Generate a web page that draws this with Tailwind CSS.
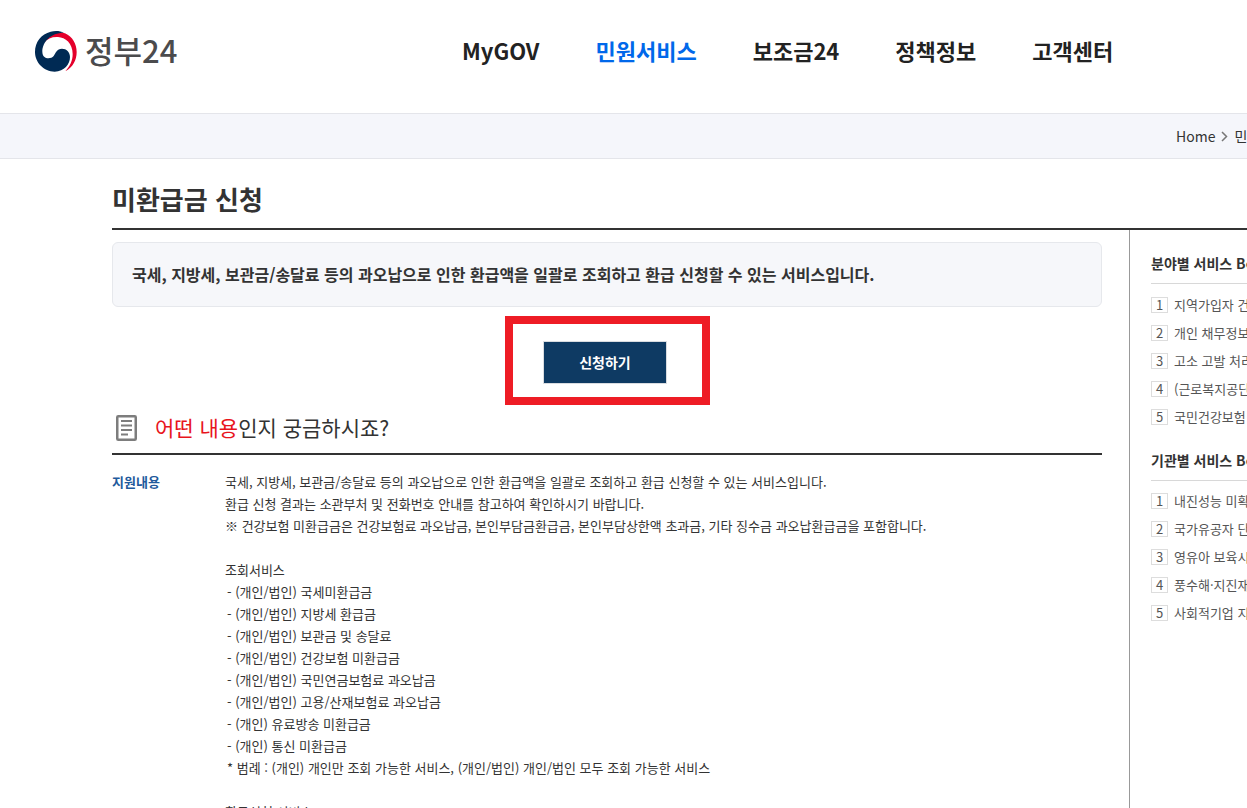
<!DOCTYPE html>
<html lang="ko">
<head>
<meta charset="utf-8">
<meta name="viewport" content="width=device-width, initial-scale=1">
<title>정부24 - 미환급금 신청</title>
<script src="https://cdn.jsdelivr.net/npm/@tailwindcss/browser@4"></script>
</head>
<body class="overflow-x-hidden bg-white font-['Noto_Sans_CJK_KR','Noto_Sans',sans-serif] text-[#333]">
<header class="flex h-[114px] items-start border-b border-[#e4e5ea] pt-[30px] pl-[34px]">
  <a href="#" class="flex w-[428px] shrink-0 items-start gap-[7px]" aria-label="정부24">
    <svg class="size-11 shrink-0" viewBox="12 12 132 132" aria-hidden="true">
      <path fill="#e4002b" d="M42 50C52 22 85 15 105 22C128 32 140 55 140 78C140 103 128 124 106 136C120 120 128 104 128 84C128 52 106 34 84 33C66 32 52 38 42 50Z"/>
      <path fill="#002a54" d="M102 20C90 14 74 14 62 17C34 24 15 48 15 78C15 110 42 137 74 137C103 137 120 114 120 93C120 78 109 68 96 68C80 68 78 80 71 90C62 101 37 100 37 77C37 48 62 20 102 20Z"/>
    </svg>
    <span class="text-[31px] leading-10 font-medium text-[#4b4b4d]">정부24</span>
  </a>
  <nav class="flex items-center gap-14 text-[22px] leading-10 font-bold whitespace-nowrap text-[#222]">
    <a href="#">MyGOV</a>
    <a href="#" class="text-[#0068ea]">민원서비스</a>
    <a href="#">보조금24</a>
    <a href="#">정책정보</a>
    <a href="#">고객센터</a>
  </nav>
</header>
<nav aria-label="현재 위치" class="flex h-[45px] items-center border-b border-[#e4e5ea] bg-[#f5f6fb] text-sm whitespace-nowrap">
  <div class="ml-auto flex w-[71px] items-center gap-1.5">
    <a href="#">Home</a>
    <svg class="h-3 w-[7px] shrink-0" viewBox="0 0 7 12" fill="none" stroke="#777" stroke-width="1.5" aria-hidden="true"><path d="M1 2l4.500 4.500L1 11"/></svg>
    <a href="#">민원서비스</a>
  </div>
</nav>
<div class="ml-28">
  <h1 class="border-b-2 border-[#333] pt-5 pb-[9px] text-[26px] leading-10 font-bold">미환급금 신청</h1>
  <div class="flex items-stretch">
    <main class="mr-[27px] min-w-0 flex-1 pt-3 pb-10">
      <p class="rounded-md border border-[#e6e8ec] bg-[#f6f7fa] px-[19px] py-5 text-base leading-[23px] font-bold">국세, 지방세, 보관금/송달료 등의 과오납으로 인한 환급액을 일괄로 조회하고 환급 신청할 수 있는 서비스입니다.</p>
      <div class="mt-[9px] ml-[393px] flex h-[89px] w-[205px] items-center border-8 border-[#ee1c25] pl-[30px]">
        <button type="button" class="mt-1 h-[43px] w-[124px] border border-[#d9dce0] bg-[#0e3a63] pb-0.5 text-sm font-bold text-white">신청하기</button>
      </div>
      <h2 class="flex h-[50px] items-center border-b-2 border-[#333] pb-0.5 pl-1 text-[21px] font-normal">
        <svg class="mr-[18px] h-[26px] w-[21px]" viewBox="0 0 21 26" fill="none" stroke="#7d7d7d" stroke-width="2" aria-hidden="true"><rect x="1.250" y="1.250" width="18.500" height="23.500" rx="1" stroke-width="2.500"/><path d="M5 6h11M5 10.500h11M5 15h11M5 19.500h7"/></svg>
        <span><span class="text-[#e8141c]">어떤 내용</span>인지 궁금하시죠?</span>
      </h2>
      <section class="mt-4 flex text-[13px] leading-[22px]">
        <h3 class="w-[113px] shrink-0 font-bold text-[#1f5a9c]">지원내용</h3>
        <div class="min-w-0 flex-1">
          <p>국세, 지방세, 보관금/송달료 등의 과오납으로 인한 환급액을 일괄로 조회하고 환급 신청할 수 있는 서비스입니다.</p>
          <p>환급 신청 결과는 소관부처 및 전화번호 안내를 참고하여 확인하시기 바랍니다.</p>
          <p>※ 건강보험 미환급금은 건강보험료 과오납금, 본인부담금환급금, 본인부담상한액 초과금, 기타 징수금 과오납환급금을 포함합니다.</p>
          <p class="mt-[22px]">조회서비스</p>
          <ul class="pl-0.5">
            <li>- (개인/법인) 국세미환급금</li>
            <li>- (개인/법인) 지방세 환급금</li>
            <li>- (개인/법인) 보관금 및 송달료</li>
            <li>- (개인/법인) 건강보험 미환급금</li>
            <li>- (개인/법인) 국민연금보험료 과오납금</li>
            <li>- (개인/법인) 고용/산재보험료 과오납금</li>
            <li>- (개인) 유료방송 미환급금</li>
            <li>- (개인) 통신 미환급금</li>
            <li>* 범례 : (개인) 개인만 조회 가능한 서비스, (개인/법인) 개인/법인 모두 조회 가능한 서비스</li>
          </ul>
          <p class="mt-[22px]">환급신청 서비스</p>
        </div>
      </section>
    </main>
    <aside class="w-[118px] shrink-0 overflow-hidden border-l border-[#999] pt-[21px] pl-[21px] text-[13px] whitespace-nowrap text-[#555]">
      <section>
        <h2 class="border-b border-[#d8d8d8] pb-2 text-sm leading-6 font-bold text-[#333]">분야별 서비스 Best</h2>
        <ol class="pt-[7px] leading-7">
          <li class="flex items-center gap-1.5"><span class="flex h-4 w-[17px] shrink-0 items-center justify-center border border-[#ddd]">1</span><a href="#">지역가입자 건강</a></li>
          <li class="flex items-center gap-1.5"><span class="flex h-4 w-[17px] shrink-0 items-center justify-center border border-[#ddd]">2</span><a href="#">개인 채무정보</a></li>
          <li class="flex items-center gap-1.5"><span class="flex h-4 w-[17px] shrink-0 items-center justify-center border border-[#ddd]">3</span><a href="#">고소 고발 처리</a></li>
          <li class="flex items-center gap-1.5"><span class="flex h-4 w-[17px] shrink-0 items-center justify-center border border-[#ddd]">4</span><a href="#">(근로복지공단)</a></li>
          <li class="flex items-center gap-1.5"><span class="flex h-4 w-[17px] shrink-0 items-center justify-center border border-[#ddd]">5</span><a href="#">국민건강보험</a></li>
        </ol>
      </section>
      <section class="mt-[17px]">
        <h2 class="border-b border-[#d8d8d8] pb-2 text-sm leading-6 font-bold text-[#333]">기관별 서비스 Best</h2>
        <ol class="pt-1.5 leading-7">
          <li class="flex items-center gap-1.5"><span class="flex h-4 w-[17px] shrink-0 items-center justify-center border border-[#ddd]">1</span><a href="#">내진성능 미확보</a></li>
          <li class="flex items-center gap-1.5"><span class="flex h-4 w-[17px] shrink-0 items-center justify-center border border-[#ddd]">2</span><a href="#">국가유공자 단체</a></li>
          <li class="flex items-center gap-1.5"><span class="flex h-4 w-[17px] shrink-0 items-center justify-center border border-[#ddd]">3</span><a href="#">영유아 보육시설</a></li>
          <li class="flex items-center gap-1.5"><span class="flex h-4 w-[17px] shrink-0 items-center justify-center border border-[#ddd]">4</span><a href="#">풍수해·지진재해</a></li>
          <li class="flex items-center gap-1.5"><span class="flex h-4 w-[17px] shrink-0 items-center justify-center border border-[#ddd]">5</span><a href="#">사회적기업 지원</a></li>
        </ol>
      </section>
    </aside>
  </div>
</div>
</body>
</html>
